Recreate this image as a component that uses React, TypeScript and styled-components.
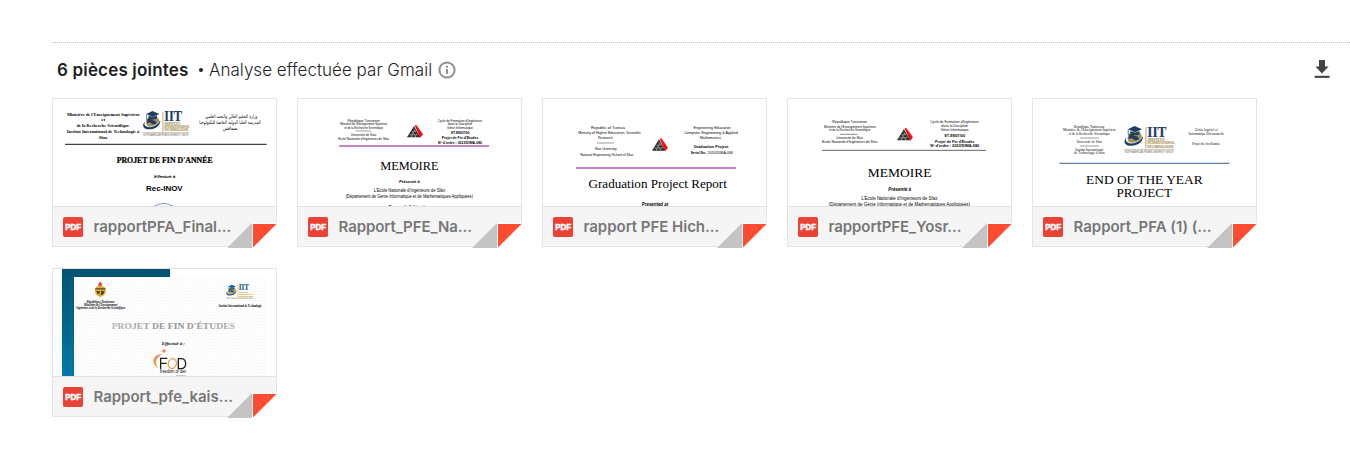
import React from "react";
import styled, { createGlobalStyle } from "styled-components";

const GlobalStyle = createGlobalStyle`
  html, body { margin: 0; padding: 0; background: #fff; }
  body { font-family: Inter, "Open Sans", "Liberation Sans", sans-serif; }
`;

const Page = styled.main`
  box-sizing: border-box;
  width: 1350px;
  height: 457px;
  padding: 42px 0 0 52px;
  overflow: hidden;
  background: #fff;
`;

const Divider = styled.div`
  height: 0;
  border-top: 1px dotted #c4c4c4;
`;

const Header = styled.header`
  box-sizing: border-box;
  display: flex;
  align-items: center;
  height: 55px;
  padding: 0 20px 2px 5px;
`;

const Count = styled.h2`
  margin: 0;
  width: 142px;
  font-size: 17px;
  font-weight: 600;
  letter-spacing: 0.17px;
  white-space: nowrap;
  color: #1f1f1f;
`;

const Bullet = styled.span`
  width: 4px;
  height: 4px;
  margin-right: 6px;
  border-radius: 50%;
  background: #222;
`;

const Scan = styled.span`
  width: 223px;
  font-size: 17px;
  font-weight: 300;
  letter-spacing: 0.02px;
  white-space: nowrap;
  color: #1f1f1f;
`;

const InfoButton = styled.span`
  display: flex;
  margin-left: 6px;
  flex: 1;
`;

const DownloadAll = styled.span`
  display: flex;
  padding-bottom: 2px;
`;

const Grid = styled.section`
  display: grid;
  grid-template-columns: repeat(5, 225px);
  gap: 21px 20px;
`;

const Card = styled.article`
  position: relative;
  box-sizing: border-box;
  width: 225px;
  height: 149px;
  border: 1px solid #e5e5e5;
  background: #fff;
`;

const Preview = styled.svg`
  display: block;
  width: 223px;
  height: 107px;
`;

const Footer = styled.footer`
  box-sizing: border-box;
  display: flex;
  align-items: center;
  height: 40px;
  padding-left: 10px;
  border-top: 1px solid #e0e0e0;
  background: #f5f5f5;
`;

const PdfIcon = styled.svg`
  width: 20px;
  height: 20px;
  margin-right: 10.5px;
`;

const FileName = styled.span<{ $track: number }>`
  font-size: 15px;
  font-weight: 600;
  line-height: 20px;
  letter-spacing: ${(p) => p.$track}px;
  white-space: pre;
  color: #777;
`;

const Fold = styled.svg`
  position: absolute;
  right: -1px;
  bottom: -2px;
  width: 50px;
  height: 26px;
`;

type LineProps = {
  x: number;
  y: number;
  w: number;
  s: number;
  children: string;
  serif?: boolean;
  bold?: boolean;
  italic?: boolean;
  fill?: string;
  family?: string;
  heavy?: number;
};

/* One line of a document page, centred on x and set to width w. */
const Line = ({ x, y, w, s, children, serif, bold, italic, fill = "#000", family, heavy = 0 }: LineProps) => (
  <text
    x={x}
    y={y}
    fontSize={s}
    textAnchor="middle"
    textLength={w}
    lengthAdjust="spacingAndGlyphs"
    fontFamily={family ?? (serif ? '"Liberation Serif", serif' : '"Liberation Sans", sans-serif')}
    fontWeight={bold ? 700 : 400}
    fontStyle={italic ? "italic" : "normal"}
    fill={fill}
    stroke={heavy ? fill : "none"}
    strokeWidth={heavy}
  >
    {children}
  </text>
);

const IitLogo = ({ x, y, k = 1, gold = "#a8935a", navy = "#1f3d63" }: { x: number; y: number; k?: number; gold?: string; navy?: string }) => (
  <g transform={`translate(${x} ${y}) scale(${k})`}>
    <ellipse cx="31" cy="34" rx="21" ry="19" fill={gold} />
    <path d="M14 25q8 -5 16 3l8 2 6 8-12 3-10-6-9 2z" fill={navy} />
    <path d="M8 31C-6 45 4 58 24 56 43 54 55 40 54 29 45 45 22 54 10 45 4 41 5 36 8 31z" fill={navy} />
    <path d="M5 41c12 14 34 6 46-8" fill="none" stroke="#fff" strokeWidth="2" />
    <path d="M11 9 30 0l21 9-20 9z" fill={navy} />
    <path d="M18 14v9q13 7 26 0v-9l-13 6z" fill={navy} />
    <path d="M12 10v16" stroke={navy} strokeWidth="2" />
    <path d="M62 3v60" stroke={gold} strokeWidth="2.5" />
    <Line x={93} y={30} w={54} s={42} serif bold heavy={0.6} fill={navy}>IIT</Line>
    <Line x={91} y={42} w={48} s={11} serif bold heavy={0.4} fill={gold}>INSTITUT</Line>
    <Line x={105} y={52} w={78} s={11} serif bold heavy={0.4} fill={gold}>INTERNATIONAL</Line>
    <Line x={103} y={62} w={74} s={11} serif bold heavy={0.4} fill={gold}>TECHNOLOGIE</Line>
    <path d="M0 66h142" stroke={gold} strokeWidth="1.5" />
    <Line x={71} y={75} w={138} s={9} fill="#555">NORTH AMERICAN PRIVATE UNIVERSITY GROUP</Line>
  </g>
);

const EnisLogo = ({ x, y }: { x: number; y: number }) => (
  <g transform={`translate(${x} ${y})`}>
    <path d="M23 0 28 -1 48 27 39 38z" fill="#f80c0c" />
    <path d="M21 2 0 36h39z" fill="#2d2d2d" />
    <path d="M19 10l8 10M14 19l13 16M9 27l7 8M25 13 12 35M31 24l-7 11M8 28h23M14 19h14" stroke="#ccc" strokeWidth="1.4" />
  </g>
);

const ProjetAnnee = () => (
  <>
    <Line x={166} y={66} w={218} s={12} serif bold>Ministère de l'Enseignement Supérieur</Line>
    <Line x={166} y={82} w={12} s={12} serif bold>et</Line>
    <Line x={165} y={100} w={158} s={12} serif bold>de la Recherche Scientifique</Line>
    <Line x={165} y={117} w={217} s={12} serif bold>Institut International de Technologie à</Line>
    <Line x={165} y={135} w={26} s={12} serif bold>Sfax</Line>
    <IitLogo x={284} y={51} k={0.98} />
    <Line x={550} y={73} w={156} s={15} family='"DejaVu Sans", sans-serif'>وزارة التعليم العالي والبحث العلمي</Line>
    <Line x={546} y={89} w={184} s={15} family='"DejaVu Sans", sans-serif'>المدرسة العليا الدولية الخاصة للتكنولوجيا</Line>
    <Line x={547} y={107} w={44} s={15} family='"DejaVu Sans", sans-serif'>بصفاقس</Line>
    <path d="M51 151h605" stroke="#444" strokeWidth="3.5" />
    <Line x={350} y={207} w={288} s={24} serif bold heavy={0.7}>PROJET DE FIN D'ANNÉE</Line>
    <Line x={350} y={251} w={64} s={12} italic heavy={0.3}>Effectué à</Line>
    <Line x={349} y={291} w={110} s={20} bold>Rec-INOV</Line>
    <path d="M318 337q28-17 58 0" fill="none" stroke="#5878ea" strokeWidth="2.5" />
  </>
);

const MemoireNa = () => (
  <>
    <Line x={212} y={83} w={97} s={11}>République Tunisienne</Line>
    <Line x={212} y={94} w={141} s={10}>Ministère de l'Enseignement Supérieur</Line>
    <Line x={212} y={104} w={116} s={10}>et de la Recherche Scientifique</Line>
    <path d="M187 111h48" stroke="#777" strokeWidth="2" />
    <Line x={212} y={125} w={76} s={10.5}>Université de Sfax</Line>
    <Line x={212} y={137} w={153} s={10.5}>Ecole Nationale d'Ingénieurs de Sfax</Line>
    <EnisLogo x={342} y={94} />
    <Line x={501} y={83} w={134} s={11}>Cycle de Formation d'Ingénieurs</Line>
    <Line x={501} y={94} w={74} s={10}>dans la Discipline</Line>
    <Line x={501} y={104} w={78} s={10.5}>Génie Informatique</Line>
    <Line x={501} y={119} w={56} s={11} bold>ST-EN07/00</Line>
    <Line x={501} y={136} w={110} s={11} bold>Projet de Fin d'Etudes</Line>
    <Line x={501} y={149} w={132} s={11} bold>N° d'ordre : 2023/DIMA-080</Line>
    <path d="M138 156h450" stroke="#b45fb0" strokeWidth="5" />
    <Line x={349} y={228} w={175} s={39} serif>MEMOIRE</Line>
    <Line x={349} y={266} w={62} s={13} bold italic>Présenté à</Line>
    <Line x={349} y={294} w={214} s={13.5}>L'Ecole Nationale d'Ingénieurs de Sfax</Line>
    <Line x={349} y={311} w={382} s={13.5}>(Département de Génie Informatique et de Mathématiques Appliquées)</Line>
    <Line x={349} y={341} w={124} s={13} bold>En vue de l'obtention</Line>
  </>
);

const Graduation = () => (
  <>
    <Line x={210} y={104} w={102} s={12.5}>Republic of Tunisia</Line>
    <Line x={215} y={120} w={188} s={12.5}>Ministry of Higher Education, Scientific</Line>
    <Line x={202} y={136} w={44} s={12}>Research</Line>
    <path d="M177 147h51" stroke="#888" strokeWidth="2.5" />
    <Line x={203} y={168} w={66} s={10.5}>Sfax University</Line>
    <Line x={206} y={186} w={159} s={11}>National Engineering School of Sfax</Line>
    <EnisLogo x={342} y={134} />
    <Line x={522} y={104} w={111} s={12.5}>Engineering Education</Line>
    <Line x={519} y={121} w={161} s={12.5}>Computer Engineering &amp; Applied</Line>
    <Line x={517} y={136} w={64} s={12}>Mathematics</Line>
    <Line x={519} y={163} w={104} s={13} bold>Graduation Project</Line>
    <Line x={481} y={180} w={46} s={12.5} bold>Serial No:</Line>
    <Line x={547} y={180} w={77} s={12.5}>2020/DIMA-084</Line>
    <path d="M114 222h480" stroke="#c382c3" strokeWidth="5.5" />
    <Line x={359} y={283} w={415} s={39} serif>Graduation Project Report</Line>
    <Line x={351} y={335} w={79} s={14} bold italic>Presented at</Line>
  </>
);

const MemoireYosr = () => (
  <>
    <Line x={200} y={88} w={104} s={11}>République Tunisienne</Line>
    <Line x={201} y={101} w={156} s={10.5}>Ministère de l'Enseignement Supérieur</Line>
    <Line x={200} y={111} w={124} s={10.5}>et de la Recherche Scientifique</Line>
    <path d="M171 121h53" stroke="#777" strokeWidth="2.5" />
    <Line x={200} y={134} w={80} s={11}>Université de Sfax</Line>
    <Line x={200} y={148} w={166} s={11.5}>Ecole Nationale d'Ingénieurs de Sfax</Line>
    <EnisLogo x={342} y={103} />
    <Line x={515} y={88} w={146} s={11}>Cycle de Formation d'Ingénieurs</Line>
    <Line x={515} y={100} w={80} s={10.5}>dans la Discipline</Line>
    <Line x={515} y={111} w={84} s={10.5}>Génie Informatique</Line>
    <Line x={515} y={128} w={62} s={11} bold>ST-EN07/00</Line>
    <Line x={515} y={147} w={118} s={12.5} bold>Projet de Fin d'Etudes</Line>
    <Line x={515} y={160} w={147} s={12} bold>N° d'ordre : 2023/DIMA-080</Line>
    <path d="M117 169h492" stroke="#666" strokeWidth="3" />
    <Line x={350} y={248} w={191} s={40} serif>MEMOIRE</Line>
    <Line x={350} y={290} w={68} s={13.5} bold italic>Présenté à</Line>
    <Line x={349} y={319} w={229} s={14}>L'Ecole Nationale d'Ingénieurs de Sfax</Line>
    <Line x={349} y={337} w={424} s={14}>(Département de Génie Informatique et de Mathématiques Appliquées)</Line>
  </>
);

const EndOfYear = () => (
  <>
    <Line x={184} y={102} w={93} s={10.5} serif>République Tunisienne</Line>
    <Line x={184} y={112} w={158} s={11} serif>Ministère de l'Enseignement Supérieur</Line>
    <Line x={184} y={122} w={124} s={11} serif>et de la Recherche Scientifique</Line>
    <path d="M156 132h57M156 156h57" stroke="#999" strokeWidth="3" />
    <Line x={184} y={146} w={76} s={10.5} serif>Université de Sfax</Line>
    <Line x={184} y={170} w={84} s={11} serif>Institut International</Line>
    <Line x={184} y={180} w={92} s={11} serif>de Technologie à Sfax</Line>
    <IitLogo x={288} y={96} k={1.06} />
    <Line x={535} y={110} w={68} s={11} serif>Génie logiciel et</Line>
    <Line x={535} y={122} w={107} s={11} serif>Informatique Décisionnelle</Line>
    <Line x={535} y={152} w={84} s={11} serif>Projet de fin d'année</Line>
    <path d="M94 208h510" stroke="#5f83a8" strokeWidth="3.5" />
    <Line x={349} y={270} w={350} s={40} serif>END OF THE YEAR</Line>
    <Line x={349} y={309} w={167} s={40} serif>PROJECT</Line>
  </>
);

const ProjetEtudes = () => (
  <>
    <defs>
      <linearGradient id="teal" x1="0" y1="0" x2="0" y2="1">
        <stop offset="0" stopColor="#005370" />
        <stop offset="1" stopColor="#0078a8" />
      </linearGradient>
      <linearGradient id="title" x1="0" y1="0" x2="1" y2="0">
        <stop offset="0" stopColor="#b5b5b5" />
        <stop offset="0.55" stopColor="#8e8e8e" />
        <stop offset="1" stopColor="#b0b0b0" />
      </linearGradient>
      <linearGradient id="fod" x1="0" y1="0" x2="0" y2="1">
        <stop offset="0" stopColor="#f08468" />
        <stop offset="1" stopColor="#f5a83c" />
      </linearGradient>
      <pattern id="dots" width="9" height="9" patternUnits="userSpaceOnUse">
        <path d="M0 1h9M1 0v9" stroke="#f5f5f5" strokeWidth="1.4" />
      </pattern>
    </defs>
    <path d="M42 15h324v24H78v297H42z" fill="url(#teal)" />
    <path d="M78 39h573v297H78z" fill="url(#dots)" />
    <g transform="translate(140 53)">
      <path d="M11 8 16 0l7 7-3 7h-9z" fill="#d6463c" />
      <path d="M1 19q16-15 32 0v12q-3 12-16 15Q3 43 1 31z" fill="#e0ad3e" />
      <path d="M2 19h30v5H2z" fill="#805e2d" />
      <path d="M5 28h10v10q-9-1-10-10M19 27l11 2-4 9-7 2z" fill="#574526" />
    </g>
    <Line x={158} y={117} w={83} s={9} serif bold italic>République Tunisienne</Line>
    <Line x={158} y={126} w={100} s={9} serif bold italic>Ministère de l'Enseignement</Line>
    <Line x={158} y={136} w={147} s={9} serif bold italic>Supérieur et de la Recherche Scientifique</Line>
    <IitLogo x={534} y={62} k={0.58} gold="#d69e38" navy="#1d5e96" />
    <Line x={577} y={129} w={129} s={9} serif bold>Institut International de Technologie</Line>
    <Line x={376} y={196} w={370} s={27} serif bold fill="url(#title)">PROJET DE FIN D'ÉTUDES</Line>
    <Line x={376} y={243} w={70} s={12.5} serif bold italic>Effectué à :</Line>
    <circle cx="348" cy="261" r="5.5" fill="#ee8b67" />
    <path d="M344 270C312 271 308 300 331 312 321 298 320 282 344 270z" fill="url(#fod)" />
    <path d="M338 315v-32h20M338 298h18M391 284v30h8q14-1 14-15 0-15-14-15z" fill="none" stroke="#222" strokeWidth="4" />
    <ellipse cx="373" cy="299" rx="12" ry="15" transform="rotate(15 373 299)" fill="none" stroke="#f29a50" strokeWidth="4" />
    <Line x={375} y={328} w={78} s={14}>freedom of dev</Line>
    <path d="M384 335h30" stroke="#888" strokeWidth="1.5" />
  </>
);

const files = [
  { name: "rapportPFA_Final...", track: -0.03, Page: ProjetAnnee },
  { name: "Rapport_PFE_Na...", track: -0.08, Page: MemoireNa },
  { name: "rapport PFE Hich...", track: -0.03, Page: Graduation },
  { name: "rapportPFE_Yosr...", track: -0.08, Page: MemoireYosr },
  { name: "Rapport_PFA (1) (...", track: -0.02, Page: EndOfYear },
  { name: "Rapport_pfe_kais...", track: -0.04, Page: ProjetEtudes },
];

export default function App() {
  return (
    <Page>
      <GlobalStyle />
      <Divider />
      <Header>
        <Count>6 pièces jointes</Count>
        <Bullet />
        <Scan>Analyse effectuée par Gmail</Scan>
        <InfoButton>
          <svg width="18" height="18" viewBox="0 0 18 18">
            <circle cx="9" cy="9" r="7.6" fill="none" stroke="#8b8e92" strokeWidth="2" />
            <path d="M8 8h2v5H8zM8 4.8h2v1.9H8z" fill="#8b8e92" />
          </svg>
        </InfoButton>
        <DownloadAll>
          <svg width="16" height="20" viewBox="0 0 16 20">
            <path d="M5 1h6v6.5h3.6L8 14.5 1.4 7.5H5z" fill="#444" />
            <path d="M.6 16.8h15v2.1H.6z" fill="#444" />
          </svg>
        </DownloadAll>
      </Header>
      <Grid>
        {files.map(({ name, track, Page: Doc }) => (
          <Card key={name}>
            <Preview viewBox="15 15 669 321">
              <Doc />
            </Preview>
            <Footer>
              <PdfIcon viewBox="0 0 20 20">
                <rect width="20" height="20" rx="1.8" fill="#ea4335" />
                <Line x={10.2} y={13.1} w={16} s={8.4} bold heavy={0.5} fill="#fff">PDF</Line>
              </PdfIcon>
              <FileName $track={track}>{name}</FileName>
            </Footer>
            <Fold viewBox="0 0 50 26">
              <path d="M25 1h25v25H0z" fill="#fff" />
              <path d="M25 1v25H0z" fill="#c4c4c4" />
              <path d="M26 2h23.5L26 25.5z" fill="#ff4b2f" />
            </Fold>
          </Card>
        ))}
      </Grid>
    </Page>
  );
}
